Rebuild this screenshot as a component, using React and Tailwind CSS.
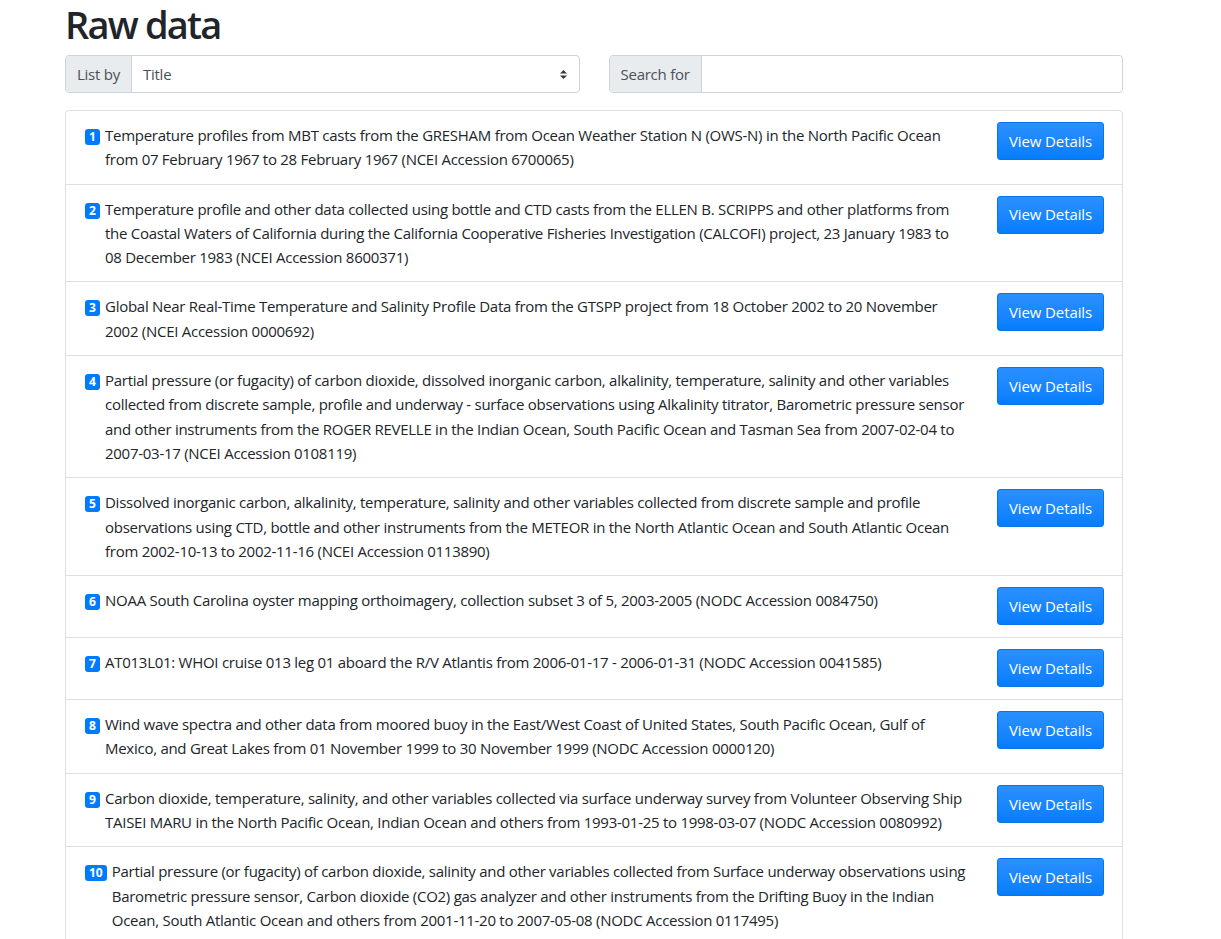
import React from 'react';

const rows = [
    'Temperature profiles from MBT casts from the GRESHAM from Ocean Weather Station N (OWS-N) in the North Pacific Ocean from 07 February 1967 to 28 February 1967 (NCEI Accession 6700065)',
    'Temperature profile and other data collected using bottle and CTD casts from the ELLEN B. SCRIPPS and other platforms from the Coastal Waters of California during the California Cooperative Fisheries Investigation (CALCOFI) project, 23 January 1983 to 08 December 1983 (NCEI Accession 8600371)',
    'Global Near Real-Time Temperature and Salinity Profile Data from the GTSPP project from 18 October 2002 to 20 November 2002 (NCEI Accession 0000692)',
    'Partial pressure (or fugacity) of carbon dioxide, dissolved inorganic carbon, alkalinity, temperature, salinity and other variables collected from discrete sample, profile and underway - surface observations using Alkalinity titrator, Barometric pressure sensor and other instruments from the ROGER REVELLE in the Indian Ocean, South Pacific Ocean and Tasman Sea from 2007-02-04 to 2007-03-17 (NCEI Accession 0108119)',
    'Dissolved inorganic carbon, alkalinity, temperature, salinity and other variables collected from discrete sample and profile observations using CTD, bottle and other instruments from the METEOR in the North Atlantic Ocean and South Atlantic Ocean from 2002-10-13 to 2002-11-16 (NCEI Accession 0113890)',
    'NOAA South Carolina oyster mapping orthoimagery, collection subset 3 of 5, 2003-2005 (NODC Accession 0084750)',
    'AT013L01: WHOI cruise 013 leg 01 aboard the R/V Atlantis from 2006-01-17 - 2006-01-31 (NODC Accession 0041585)',
    'Wind wave spectra and other data from moored buoy in the East/West Coast of United States, South Pacific Ocean, Gulf of Mexico, and Great Lakes from 01 November 1999 to 30 November 1999 (NODC Accession 0000120)',
    'Carbon dioxide, temperature, salinity, and other variables collected via surface underway survey from Volunteer Observing Ship TAISEI MARU in the North Pacific Ocean, Indian Ocean and others from 1993-01-25 to 1998-03-07 (NODC Accession 0080992)',
    'Partial pressure (or fugacity) of carbon dioxide, salinity and other variables collected from Surface underway observations using Barometric pressure sensor, Carbon dioxide (CO2) gas analyzer and other instruments from the Drifting Buoy in the Indian Ocean, South Atlantic Ocean and others from 2001-11-20 to 2007-05-08 (NODC Accession 0117495)',
];

function SelectArrows() {
    return (
        <svg width="7" height="9" viewBox="0 0 7 9" className="text-[#343a40]">
            <path d="M3.5 0 L7 3.5 H0 Z" fill="currentColor" />
            <path d="M3.5 9 L7 5.5 H0 Z" fill="currentColor" />
        </svg>
    );
}

export default function App() {
    return (
        <div className="min-h-screen bg-white text-[#212529] font-['Segoe_UI','Open_Sans',sans-serif]">
            <div className="ml-[65px] w-[1058px]">
                <h1 className="text-[38px] leading-[48px] font-semibold tracking-[-1.8px] mb-[7px]">Raw data</h1>

                {/* filters */}
                <div className="flex gap-[29px] tracking-[-0.25px]">
                    <div className="flex flex-1 h-[38px] border border-[#ced4da] rounded-[4px] overflow-hidden text-[15px]">
                        <span className="flex items-center px-[11px] bg-[#e9ecef] border-r border-[#ced4da] text-[#495057]">List by</span>
                        <div className="flex flex-1 items-center justify-between pl-[11px] pr-[12px] text-[#495057]">
                            <span>Title</span>
                            <SelectArrows />
                        </div>
                    </div>
                    <div className="flex flex-1 h-[38px] border border-[#ced4da] rounded-[4px] overflow-hidden text-[15px]">
                        <span className="flex items-center px-[11px] bg-[#e9ecef] border-r border-[#ced4da] text-[#495057]">Search for</span>
                        <div className="flex-1" />
                    </div>
                </div>

                {/* list */}
                <div className="mt-[17px] border border-[#dfdfdf] rounded-[4px]">
                    {rows.map((title, i) => (
                        <div
                            key={i}
                            className="flex items-start pl-[19px] pr-[18px] py-[12px] border-t border-[#dfdfdf] first:border-t-0"
                        >
                            <div className="flex flex-1 items-start mr-[31px] text-[15px] leading-[24.3px] tracking-[-0.27px]">
                                <span className="shrink-0 mt-[6px] mr-[5px] px-[4px] h-[16px] min-w-[15px] flex items-center justify-center rounded-[3px] bg-[#007bff] text-white text-[12px] font-bold leading-none tracking-normal">
                                    {i + 1}
                                </span>
                                <span>{title}</span>
                            </div>
                            <button className="shrink-0 -mt-[1px] h-[38px] w-[107px] rounded-[3px] border border-[#0a74e6] bg-gradient-to-b from-[#2a90ff] to-[#047dfd] text-white text-[15px] tracking-[-0.1px]">
                                View Details
                            </button>
                        </div>
                    ))}
                </div>
            </div>
        </div>
    );
}
